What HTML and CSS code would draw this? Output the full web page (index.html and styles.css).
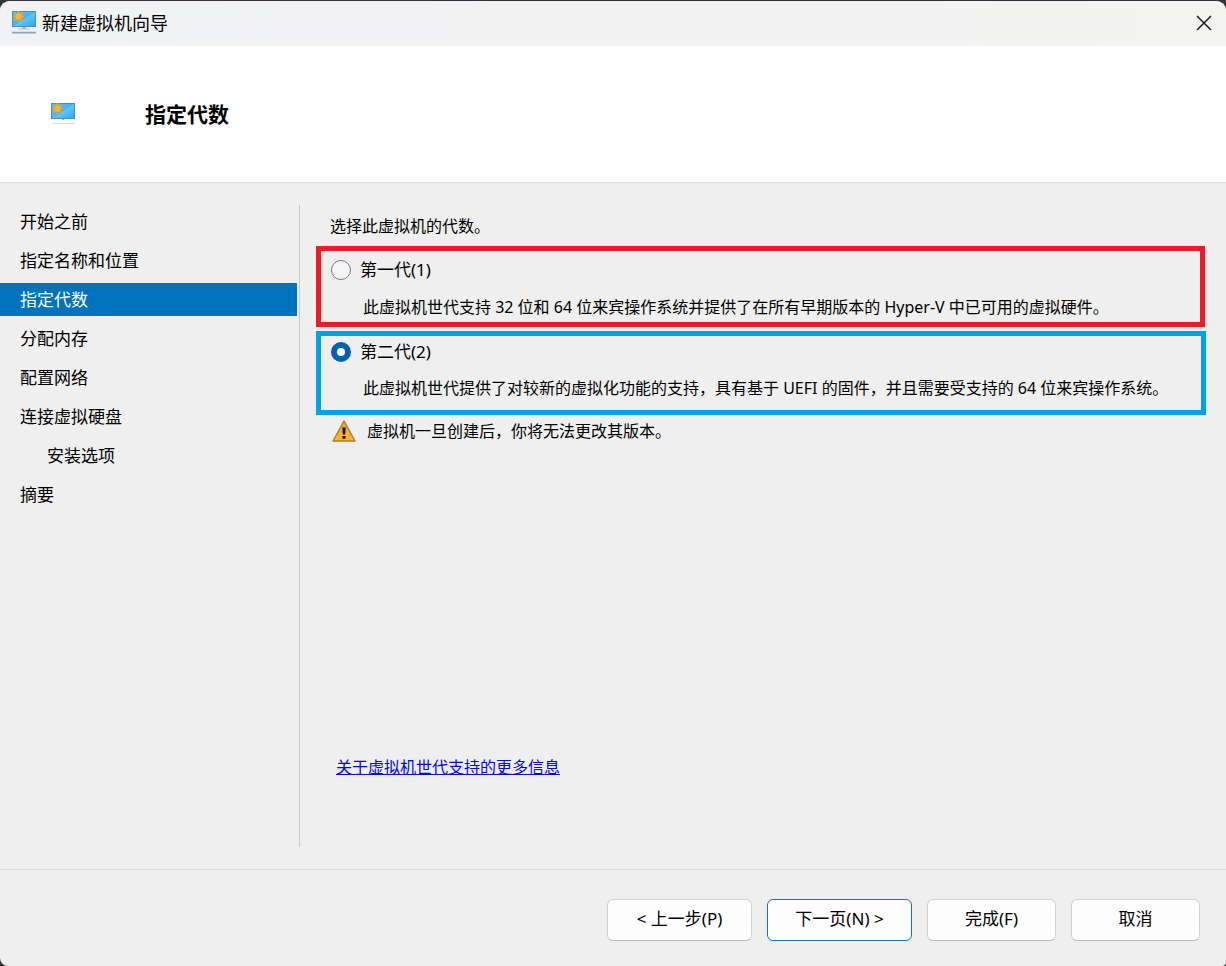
FILE: index.html
```html
<!DOCTYPE html>
<html lang="zh-CN">
<head>
<meta charset="utf-8">
<meta name="viewport" content="width=device-width, initial-scale=1">
<title>新建虚拟机向导</title>
<link rel="stylesheet" href="styles.css">
</head>
<body>
<svg class="defs" aria-hidden="true">
  <defs>
    <linearGradient id="screen" x1="0" y1="0" x2="1" y2="1">
      <stop offset="0" stop-color="#55bdf6"/>
      <stop offset="0.5" stop-color="#45b3f7"/>
      <stop offset="0.52" stop-color="#62c5fb"/>
      <stop offset="1" stop-color="#2ba4f5"/>
    </linearGradient>
    <linearGradient id="amber" x1="0" y1="0" x2="0" y2="1">
      <stop offset="0" stop-color="#e9a83a"/>
      <stop offset="1" stop-color="#fbb52f"/>
    </linearGradient>
    <symbol id="monitor" viewBox="0 0 24 17">
      <rect x="0.5" y="0.5" width="23" height="15" fill="url(#screen)" stroke="#4c8fb9"/>
      <path d="M6.500 0v11M1 5.500h11M2.500 1.500l8 8M10.500 1.500l-8 8" stroke="#f2a51f" stroke-width="1.800"/>
      <circle cx="6.500" cy="5.500" r="3" fill="#fdb72c"/>
    </symbol>
  </defs>
</svg>
<div class="window">
  <header class="titlebar">
    <svg class="titlebar-icon" viewBox="0 0 24 24" aria-hidden="true">
      <use href="#monitor" width="24" height="17"/>
      <path d="M10 16h4v1.500h4v1H6v-1h4z" fill="#a9bccb"/>
      <path d="M0 21h24v1.500H0z" fill="#8fa2b5"/>
      <path d="M0 20.500h24" stroke="#d4dde6"/>
    </svg>
    <span class="titlebar-text">新建虚拟机向导</span>
    <button class="close" type="button" aria-label="关闭">
      <svg viewBox="0 0 16 16" width="16" height="16" aria-hidden="true"><path d="M1 1l14 14M15 1L1 15" stroke="#1a1a1a" stroke-width="1.500" fill="none"/></svg>
    </button>
  </header>

  <div class="banner">
    <svg class="banner-icon" viewBox="0 0 24 22" aria-hidden="true">
      <use href="#monitor" width="24" height="17"/>
      <path d="M11 16h2v1h-2z" fill="#9fb0bd"/>
      <path d="M1 20.500h22" stroke="#d3dbe0"/>
    </svg>
    <h1 class="banner-title">指定代数</h1>
  </div>

  <div class="body">
    <nav class="steps" aria-label="步骤">
      <ul class="steps-list">
        <li class="step">开始之前</li>
        <li class="step">指定名称和位置</li>
        <li class="step step-current" aria-current="step">指定代数</li>
        <li class="step">分配内存</li>
        <li class="step">配置网络</li>
        <li class="step">连接虚拟硬盘</li>
        <li class="step step-child">安装选项</li>
        <li class="step">摘要</li>
      </ul>
    </nav>
    <main class="content">
      <p class="prompt">选择此虚拟机的代数。</p>
      <div class="option option-first">
        <div class="option-head">
          <input class="radio" type="radio" name="generation" id="gen1" aria-describedby="gen1-desc">
          <label for="gen1">第一代(1)</label>
        </div>
        <p class="option-text" id="gen1-desc">此虚拟机世代支持 32 位和 64 位来宾操作系统并提供了在所有早期版本的 Hyper-V 中已可用的虚拟硬件。</p>
      </div>
      <div class="option option-second">
        <div class="option-head">
          <input class="radio" type="radio" name="generation" id="gen2" aria-describedby="gen2-desc" checked>
          <label for="gen2">第二代(2)</label>
        </div>
        <p class="option-text" id="gen2-desc">此虚拟机世代提供了对较新的虚拟化功能的支持，具有基于 UEFI 的固件，并且需要受支持的 64 位来宾操作系统。</p>
      </div>
      <p class="warning">
        <svg class="warning-icon" viewBox="0 0 24 22" aria-hidden="true">
          <path d="M12 1.200L23 21H1z" fill="url(#amber)" stroke="#b57d1c" stroke-width="1.500" stroke-linejoin="round"/>
          <path d="M10.300 7.500h3.400l-.6 7h-2.200zM10.500 16h3v2.700h-3z" fill="#111"/>
        </svg>
        <span>虚拟机一旦创建后，你将无法更改其版本。</span>
      </p>
      <a class="more" href="#">关于虚拟机世代支持的更多信息</a>
    </main>
  </div>

  <footer class="actions">
    <button class="btn btn-wide" type="button">&lt; 上一步(P)</button>
    <button class="btn btn-wide btn-default" type="button">下一页(N) &gt;</button>
    <button class="btn" type="button">完成(F)</button>
    <button class="btn" type="button">取消</button>
  </footer>
</div>
</body>
</html>
```

FILE: styles.css
```css
* {
  box-sizing: border-box;
}

body {
  margin: 0;
  background: #343236;
  color: #000;
  font-family: "Noto Sans", "Noto Sans CJK SC", sans-serif;
  font-size: 16px;
  line-height: 24px;
}

p, h1, ul {
  margin: 0;
  padding: 0;
}

button {
  font: inherit;
  color: inherit;
}

.defs {
  position: absolute;
  width: 0;
  height: 0;
}

.window {
  display: flex;
  flex-direction: column;
  min-height: 100vh;
  border-top: 1px solid #343236;
  border-radius: 10px 10px 4px 8px;
  background: #efefef;
  overflow: hidden;
}

.titlebar {
  display: flex;
  align-items: center;
  gap: 6px;
  height: 45px;
  padding: 0 14px 2px 12px;
  background: linear-gradient(90deg, #f1f2f5, #f3f3f1);
}

.titlebar-icon {
  width: 24px;
  height: 24px;
}

.titlebar-text {
  font-size: 18px;
}

.close {
  display: flex;
  margin-left: auto;
  padding: 0;
  border: 0;
  background: none;
}

.banner {
  display: flex;
  align-items: center;
  gap: 70px;
  height: 137px;
  padding: 0 51px;
  border-bottom: 1px solid #dcdcdc;
  background: #fff;
}

.banner-icon {
  width: 24px;
  height: 22px;
}

.banner-title {
  font-size: 21px;
  line-height: 28px;
  font-weight: 700;
}

.body {
  display: flex;
  flex: 1;
  padding: 22px 20px 22px 0;
}

.steps {
  flex: 0 0 300px;
  padding-right: 2px;
  border-right: 1px solid #c8c8c8;
  font-size: 17px;
}

.steps-list {
  display: grid;
  gap: 6px;
  list-style: none;
}

.step {
  padding: 5px 20px 4px;
}

.step-current {
  background: #0072be;
  color: #fff;
}

.step-child {
  padding-left: 47px;
}

.content {
  display: flex;
  flex: 1;
  flex-direction: column;
  min-width: 0;
  padding: 9px 0 68px 16px;
}

.prompt {
  padding-left: 14px;
}

.option {
  display: grid;
  gap: 12px;
  padding: 7px 10px 4px;
  border: 5px solid #ed1c24;
}

.option-first {
  gap: 13px;
  margin-top: 8px;
  margin-right: 1px;
  padding-bottom: 3px;
}

.option-second {
  margin-top: 4px;
  padding-top: 4px;
  padding-bottom: 10px;
  border-color: #00a2e8;
}

.option-head {
  display: flex;
  align-items: center;
  gap: 9px;
  font-size: 17px;
}

.radio {
  appearance: none;
  width: 20px;
  height: 20px;
  margin: 0;
  border: 1px solid #777;
  border-radius: 50%;
  background: #f5f5f5;
}

.radio:checked {
  border: 6px solid #005fb8;
  background: #fff;
}

.option-text {
  padding-left: 32px;
}

.warning {
  display: flex;
  align-items: center;
  gap: 11px;
  margin-top: 4px;
  padding-left: 16px;
}

.warning-icon {
  flex: none;
  width: 24px;
  height: 22px;
}

.more {
  align-self: flex-start;
  margin-top: auto;
  margin-left: 20px;
  color: #00f;
}

.actions {
  display: flex;
  justify-content: flex-end;
  gap: 15px;
  padding: 29px 26px 25px;
  border-top: 1px solid #dcdcdc;
}

.btn {
  width: 129px;
  height: 42px;
  padding: 0 0 2px;
  border: 1px solid #d0d0d0;
  border-bottom-color: #bbb;
  border-radius: 6px;
  background: #fdfdfd;
  font-size: 17px;
}

.btn-wide {
  width: 145px;
}

.btn-default {
  border-color: #0f75c8;
}
```
